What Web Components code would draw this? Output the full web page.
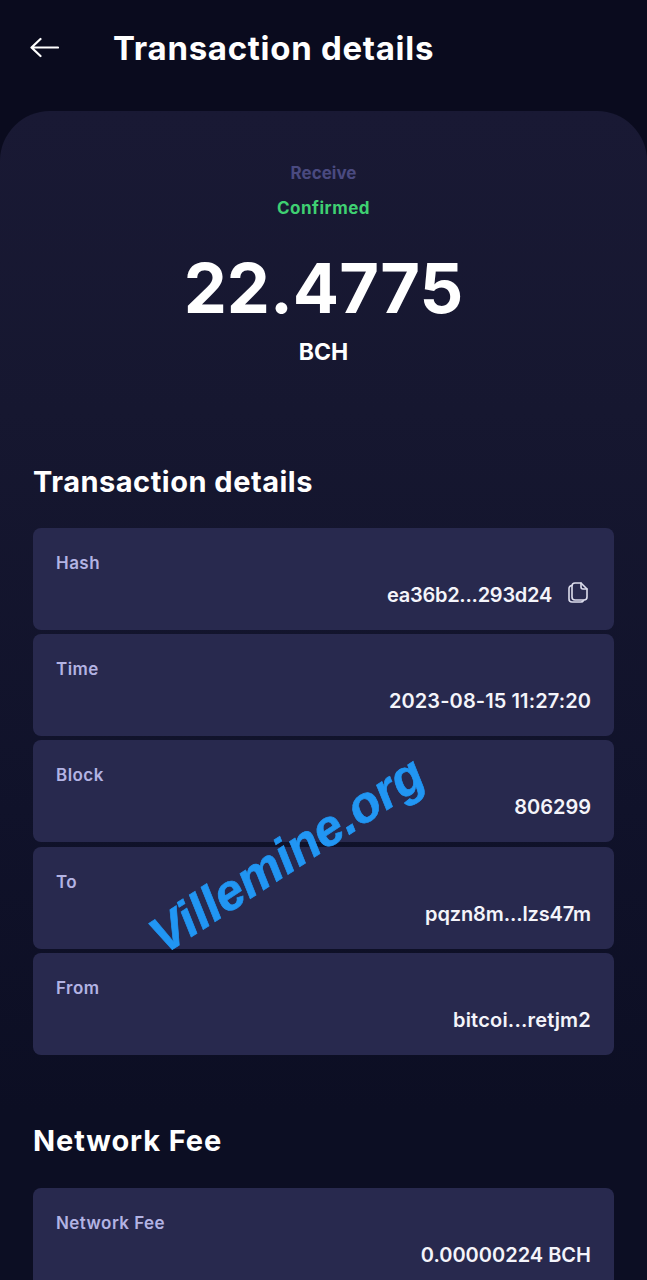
<!DOCTYPE html>
<html>
<head>
<meta charset="utf-8">
<title>Transaction details</title>
<style>
  html, body { margin: 0; height: 1280px; overflow: hidden; background: #0a0b1e; }
</style>
</head>
<body>
<tx-screen>
  <tx-header slot="header">Transaction details</tx-header>
  <tx-summary type="Receive" status="Confirmed" amount="22.4775" unit="BCH"></tx-summary>

  <tx-section title="Transaction details">
    <tx-row label="Hash" value="ea36b2...293d24" copy style="--track: -0.27px"></tx-row>
    <tx-row label="Time" value="2023-08-15 11:27:20" style="--track: 0.1px"></tx-row>
    <tx-row label="Block" value="806299"></tx-row>
    <tx-row label="To" value="pqzn8m...lzs47m" style="--track: -0.13px"></tx-row>
    <tx-row label="From" value="bitcoi...retjm2" style="--track: 0.2px"></tx-row>
  </tx-section>

  <tx-section title="Network Fee" class="fee">
    <tx-row label="Network Fee" value="0.00000224 BCH"></tx-row>
  </tx-section>

  <tx-watermark slot="overlay">Villemine.org</tx-watermark>
</tx-screen>

<script>
// Page frame: dark header area, then the rounded panel that fades into the background
class TxScreen extends HTMLElement {
  constructor() {
    super();
    this.attachShadow({ mode: 'open' });
    this.shadowRoot.innerHTML = `
      <style>
        :host {
          display: block;
          position: relative;
          width: 647px;
          height: 1280px;
          overflow: hidden;
          background: #0a0b1e;
          color: #fff;
          font-family: Inter, "Liberation Sans", sans-serif;
        }
        .panel {
          border-radius: 50px 50px 0 0;
          background: linear-gradient(180deg, #191934 0, #161730 300px, #10122a 700px, #0c0e23 1000px);
          padding: 0 33px;
          height: 1169px;
        }
      </style>
      <slot name="header"></slot>
      <div class="panel"><slot></slot></div>
      <slot name="overlay"></slot>
    `;
  }
}

class TxHeader extends HTMLElement {
  constructor() {
    super();
    this.attachShadow({ mode: 'open' });
    this.shadowRoot.innerHTML = `
      <style>
        :host {
          display: flex;
          align-items: center;
          height: 111px;
          padding: 0 0 15px 30px;
          box-sizing: border-box;
          gap: 54px;
        }
        svg { display: block; flex: none; margin-top: -1px; }
        .title {
          font-size: 33px;
          font-weight: 700;
          letter-spacing: 0.7px;
          color: #fff;
        }
      </style>
      <svg width="29" height="21" viewBox="0 0 29 21" fill="none" stroke="#fff" stroke-width="2.2" stroke-linecap="round" stroke-linejoin="round">
        <path d="M28 10.500H2M10.500 2 1.500 10.500l9 8.500"/>
      </svg>
      <span class="title"><slot></slot></span>
    `;
  }
}

class TxSummary extends HTMLElement {
  constructor() {
    super();
    this.attachShadow({ mode: 'open' });
    this.shadowRoot.innerHTML = `
      <style>
        :host {
          display: flex;
          flex-direction: column;
          align-items: center;
          height: 347px;
          padding-top: 52px;
          box-sizing: border-box;
        }
        div { line-height: 20px; white-space: nowrap; }
        .type { font-size: 17px; font-weight: 700; color: #4a4a80; }
        .status { font-size: 17px; font-weight: 700; letter-spacing: 0.5px; color: #3fd072; margin-top: 15px; }
        .amount { font-size: 68.5px; font-weight: 700; line-height: 80px; margin-top: 31px; color: #fff; }
        .unit { font-size: 23px; font-weight: 700; line-height: 28px; margin-top: 9px; color: #fff; }
      </style>
      <div class="type"></div>
      <div class="status"></div>
      <div class="amount"></div>
      <div class="unit"></div>
    `;
  }

  connectedCallback() {
    const root = this.shadowRoot;
    root.querySelector('.type').textContent = this.getAttribute('type');
    root.querySelector('.status').textContent = this.getAttribute('status');
    root.querySelector('.amount').textContent = this.getAttribute('amount');
    root.querySelector('.unit').textContent = this.getAttribute('unit');
  }
}

class TxSection extends HTMLElement {
  constructor() {
    super();
    this.attachShadow({ mode: 'open' });
    this.shadowRoot.innerHTML = `
      <style>
        :host { display: block; }
        :host(.fee) { margin-top: 62px; }
        h2 {
          margin: 0;
          font-size: 29px;
          line-height: 48px;
          font-weight: 700;
          letter-spacing: 0.5px;
          color: #fff;
        }
        :host(.fee) h2 { letter-spacing: 0.9px; }
        .rows {
          display: flex;
          flex-direction: column;
          gap: 4.2px;
          margin-top: 22px;
        }
        :host(.fee) .rows { margin-top: 23px; }
      </style>
      <h2></h2>
      <div class="rows"><slot></slot></div>
    `;
  }

  connectedCallback() {
    this.shadowRoot.querySelector('h2').textContent = this.getAttribute('title');
  }
}

class TxRow extends HTMLElement {
  constructor() {
    super();
    this.attachShadow({ mode: 'open' });
    this.shadowRoot.innerHTML = `
      <style>
        :host {
          display: flex;
          flex-direction: column;
          height: 102px;
          box-sizing: border-box;
          padding: 25px 23px 0;
          border-radius: 8px;
          background: #28294e;
        }
        .label {
          font-size: 17px;
          line-height: 20px;
          font-weight: 600;
          letter-spacing: 0.45px;
          color: #b3b3e3;
        }
        .value {
          display: flex;
          justify-content: flex-end;
          align-items: center;
          gap: 15px;
          margin-top: 9px;
          font-size: 20px;
          line-height: 26px;
          font-weight: 600;
          letter-spacing: var(--track, 0);
          color: #f4f4fa;
        }
        svg { display: none; flex: none; margin-right: 2px; margin-top: -6px; }
        :host([copy]) svg { display: block; }
      </style>
      <div class="label"></div>
      <div class="value">
        <span class="text"></span>
        <svg width="22" height="23" viewBox="0 0 22 23" fill="none" stroke="#dcdcec" stroke-width="1.6" stroke-linejoin="round" stroke-linecap="round">
          <path d="M8 2h6l6 6v8a3 3 0 0 1-3 3H8a3 3 0 0 1-3-3V5a3 3 0 0 1 3-3Z"/>
          <path d="M14 2v4a2 2 0 0 0 2 2h4"/>
          <path d="M5 4.500A3 3 0 0 0 2 7.500V18a3 3 0 0 0 3 3h9a3 3 0 0 0 2.500-1.500"/>
        </svg>
      </div>
    `;
  }

  connectedCallback() {
    this.shadowRoot.querySelector('.label').textContent = this.getAttribute('label');
    this.shadowRoot.querySelector('.text').textContent = this.getAttribute('value');
  }
}

// Diagonal watermark that lies over the rows
class TxWatermark extends HTMLElement {
  constructor() {
    super();
    this.attachShadow({ mode: 'open' });
    this.shadowRoot.innerHTML = `
      <style>
        :host {
          position: absolute;
          left: 287px;
          top: 855px;
          transform: translate(-50%, -50%) rotate(-33deg);
          font-family: "Liberation Sans", Arial, sans-serif;
          font-size: 50.5px;
          font-weight: 700;
          font-style: italic;
          line-height: 1;
          white-space: nowrap;
          color: #2196f3;
          -webkit-text-stroke: 0.7px #2196f3;
        }
      </style>
      <slot></slot>
    `;
  }
}

customElements.define('tx-screen', TxScreen);
customElements.define('tx-header', TxHeader);
customElements.define('tx-summary', TxSummary);
customElements.define('tx-section', TxSection);
customElements.define('tx-row', TxRow);
customElements.define('tx-watermark', TxWatermark);
</script>
</body>
</html>
